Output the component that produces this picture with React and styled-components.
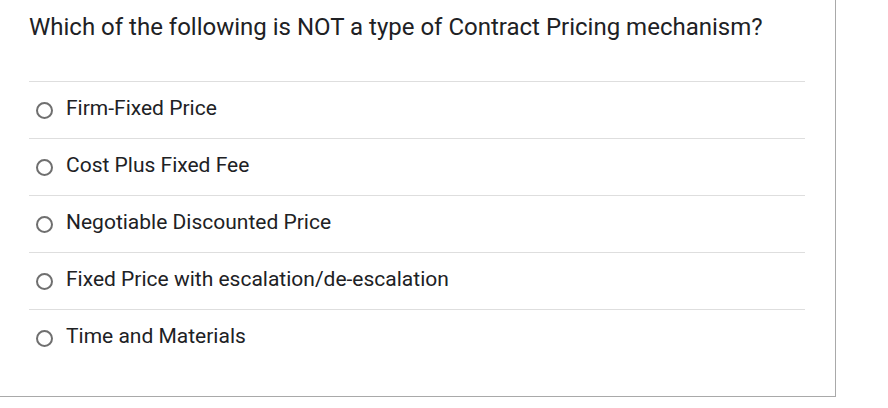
import React from "react";
import styled, { createGlobalStyle } from "styled-components";

const Global = createGlobalStyle`
  html, body { margin: 0; padding: 0; background: #fff; }
  body { font-family: Roboto, "Noto Sans", Arial, sans-serif; }
`;

const Card = styled.div`
  box-sizing: border-box;
  width: 836px;
  height: 397px;
  background: #fff;
  border-right: 1px solid #a9a9a9;
  border-bottom: 1px solid #a9a9a9;
  padding: 0 30px 0 29px;
`;

const Title = styled.h2`
  margin: 0;
  padding-top: 12px;
  height: 81px;
  box-sizing: border-box;
  font-size: 24px;
  font-weight: 400;
  line-height: 30px;
  color: #202124;
`;

const List = styled.div`
  display: flex;
  flex-direction: column;
`;

const Option = styled.label`
  display: flex;
  align-items: center;
  gap: 13px;
  height: 57px;
  box-sizing: border-box;
  border-top: 1px solid #dedede;
  padding: 1px 0 0 7px;
  font-size: 21px;
  color: #202124;
  cursor: pointer;
`;

const Radio = styled.span`
  width: 17px;
  height: 17px;
  box-sizing: border-box;
  border: 2px solid #6f6f6f;
  border-radius: 50%;
  flex: none;
`;

const Text = styled.span`
  margin-bottom: 6px;
`;

const options = [
  "Firm-Fixed Price",
  "Cost Plus Fixed Fee",
  "Negotiable Discounted Price",
  "Fixed Price with escalation/de-escalation",
  "Time and Materials",
];

export default function App() {
  return (
    <>
      <Global />
      <Card>
        <Title>Which of the following is NOT a type of Contract Pricing mechanism?</Title>
        <List>
          {options.map((o) => (
            <Option key={o}>
              <Radio />
              <Text>{o}</Text>
            </Option>
          ))}
        </List>
      </Card>
    </>
  );
}
